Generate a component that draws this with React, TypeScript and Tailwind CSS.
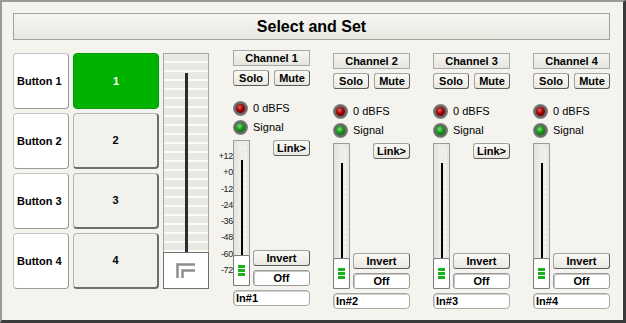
import React from "react";

const FONT = { fontFamily: '"Liberation Sans", Arial, sans-serif' };

function Led({ color }: { color: "red" | "green" }) {
  const ball =
    color === "red"
      ? "bg-[radial-gradient(circle_at_40%_35%,#e06060_0,#a00000_45%,#600000_100%)]"
      : "bg-[radial-gradient(circle_at_40%_35%,#80e080_0,#149a14_45%,#0a520a_100%)]";
  return (
    <div className="w-[15px] h-[15px] rounded-full bg-[radial-gradient(circle_at_50%_50%,#555_0,#6a6a6a_55%,#a8a8a8_85%,#d0d0d0_100%)] flex items-center justify-center">
      <div className={`w-[9px] h-[9px] rounded-full ${ball}`} />
    </div>
  );
}

function Btn({ children, className = "" }: { children: React.ReactNode; className?: string }) {
  return (
    <div
      className={`h-[16px] flex items-center justify-center text-[11px] font-bold text-black bg-gradient-to-b from-[#faf9f5] to-[#e9e8e1] border border-[#a2a2a2] border-b-[#5c5c5c] border-r-[#5c5c5c] rounded-[3px] leading-none ${className}`}
    >
      {children}
    </div>
  );
}

const SCALE = ["+12", "+0", "-12", "-24", "-36", "-48", "-60", "-72"];

function Channel({ n, first, link }: { n: number; first?: boolean; link?: boolean }) {
  return (
    <div className={`w-[77px] flex flex-col ${first ? "-mt-[3px]" : ""}`}>
      <div className="h-[16px] flex items-center justify-center text-[11px] font-bold bg-gradient-to-b from-[#f6f5f1] to-[#e5e4dd] border border-[#a8a8a8] leading-none">
        Channel {n}
      </div>
      <div className="mt-[4px] flex justify-between">
        <Btn className="w-[36px]">Solo</Btn>
        <Btn className="w-[36px]">Mute</Btn>
      </div>
      <div className="mt-[15px] h-[15px] flex items-center gap-[5px]">
        <Led color="red" />
        <span className="text-[11px] leading-none text-black">0 dBFS</span>
      </div>
      <div className="mt-[4px] h-[15px] flex items-center gap-[5px]">
        <Led color="green" />
        <span className="text-[11px] leading-none text-black">Signal</span>
      </div>
      <div className="mt-[5px] h-[146px] flex">
        <div className="relative w-[17px] h-full flex flex-col items-center border border-[#9c9c9c] bg-gradient-to-r from-[#e4e3dc] via-[#efeee8] to-[#e8e7e0]">
          {first && (
            <div className="absolute right-[calc(100%+1px)] top-[10px] h-[124px] flex flex-col justify-between items-end">
              {SCALE.map((s) => (
                <div key={s} className="h-[10px] text-[9px] leading-[10px] tracking-[-0.3px] text-[#222]">
                  {s}
                </div>
              ))}
            </div>
          )}
          <div className="absolute right-[3px] top-[6px] bottom-[34px] w-0 border-r border-dashed border-white" />
          <div className="h-[19px] shrink-0" />
          <div className="flex-1 w-[2px] bg-black" />
          <div className="h-[31px] w-[17px] -mx-px -mb-px shrink-0 bg-white border border-[#7a7a7a] rounded-[2px] flex flex-col items-center justify-center gap-[1px]">
            <div className="w-[7px] h-[3px] bg-[#1ab21a]" />
            <div className="w-[7px] h-[3px] bg-[#1ab21a]" />
            <div className="w-[7px] h-[3px] bg-[#1ab21a]" />
          </div>
        </div>
        <div className="ml-[3px] flex-1 flex flex-col">
          {link ? <Btn className="self-end w-[37px]">Link&gt;</Btn> : <div />}
          <div className="mt-auto">
            <Btn className="w-full">Invert</Btn>
            <div className="mt-[4px] h-[16px] flex items-center justify-center text-[11px] font-bold bg-white border border-[#9a9a9a] rounded-[3px] shadow-[inset_1px_1px_0_#c8c8c8] leading-none">
              Off
            </div>
          </div>
        </div>
      </div>
      <div className="mt-[4px] h-[16px] flex items-center pl-[2px] text-[11px] font-bold bg-white border border-[#a8a8a8] rounded-[4px] shadow-[inset_1px_1px_0_#d0d0d0] leading-none">
        In#{n}
      </div>
    </div>
  );
}

export default function App() {
  return (
    <div
      style={FONT}
      className="w-[626px] h-[323px] box-border bg-[#f4f3ee] border-t-2 border-l-2 border-t-[#9a9a9a] border-l-[#9a9a9a] border-r-[3px] border-b-[3px] border-r-[#3a3a3a] border-b-[#3a3a3a] pl-[11px] pr-[13px] pt-[11px] text-black"
    >
      <div className="h-[27px] flex items-center justify-center border border-[#a0a0a0] bg-gradient-to-b from-[#f7f6f2] to-[#e7e6df] text-[16px] font-bold">
        Select and Set
      </div>
      <div className="mt-[13px] flex items-start">
        <div className="w-[56px] flex flex-col gap-[4px]">
          {[1, 2, 3, 4].map((i) => (
            <div
              key={i}
              className="h-[56px] flex items-center pl-[3px] text-[11px] font-bold bg-white border border-[#c4c4c4] border-b-[#9a9a9a] border-r-[#9a9a9a] rounded-[4px]"
            >
              Button {i}
            </div>
          ))}
        </div>
        <div className="ml-[4px] w-[86px] flex flex-col gap-[4px]">
          {[1, 2, 3, 4].map((i) =>
            i === 1 ? (
              <div
                key={i}
                className="h-[56px] flex items-center justify-center text-[11px] font-bold text-white bg-[#00b300] border border-[#079a07] rounded-[4px]"
              >
                {i}
              </div>
            ) : (
              <div
                key={i}
                className="h-[56px] flex items-center justify-center text-[11px] font-bold bg-[#f3f1ec] border border-[#b6b6b6] border-b-[#6e6e6e] border-r-[#6e6e6e] border-b-2 border-r-2 rounded-[4px]"
              >
                {i}
              </div>
            )
          )}
        </div>
        <div className="ml-[4px] w-[46px] h-[236px] flex flex-col items-center border border-[#a6a6a6] bg-[repeating-linear-gradient(to_bottom,#e9e8e2_0px,#e9e8e2_7px,#fbfbf7_7px,#fbfbf7_9px)]">
          <div className="h-[19px] shrink-0" />
          <div className="flex-1 w-[3px] bg-[#2c2c2c]" />
          <div className="h-[37px] w-[46px] -mb-px shrink-0 bg-white border border-[#6f6f6f] flex items-center justify-center">
            <svg width="20" height="16" viewBox="0 0 20 16">
              <path d="M1.5 15V1.5H19" fill="none" stroke="#8e8e8e" strokeWidth="2.5" />
              <path d="M6.5 15V7.5H19" fill="none" stroke="#8e8e8e" strokeWidth="2.5" />
            </svg>
          </div>
        </div>
        <div className="ml-[24px] flex gap-[23px]">
          <Channel n={1} first link />
          <Channel n={2} link />
          <Channel n={3} link />
          <Channel n={4} />
        </div>
      </div>
    </div>
  );
}
